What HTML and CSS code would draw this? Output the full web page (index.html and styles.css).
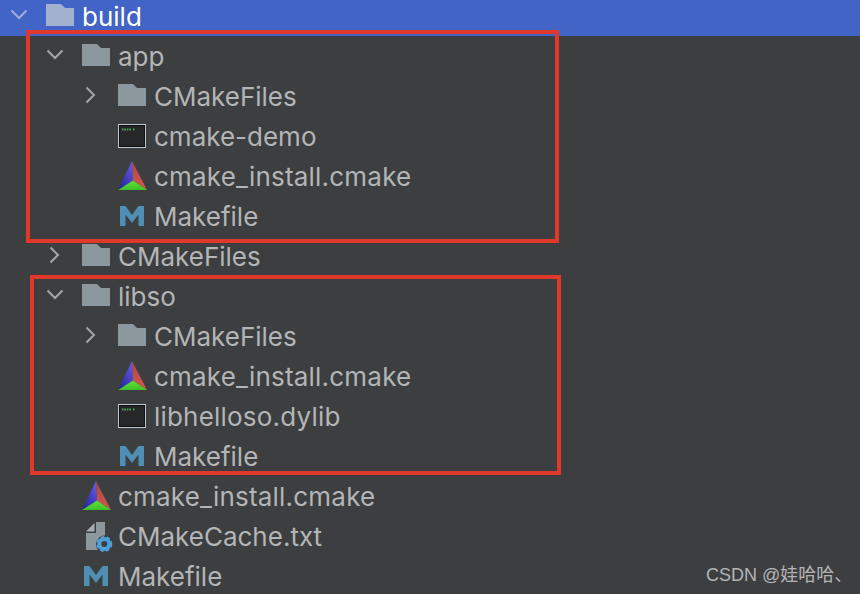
FILE: index.html
```html
<!DOCTYPE html>
<html lang="zh">
<head>
<meta charset="utf-8">
<title>build</title>
<link rel="stylesheet" href="styles.css">
</head>
<body>
<svg class="defs" width="0" height="0" aria-hidden="true">
  <defs>
    <linearGradient id="cm-blue" x1="0" y1="1" x2="0.6" y2="0">
      <stop offset="0" stop-color="#1c1c9c"/>
      <stop offset="1" stop-color="#6058e0"/>
    </linearGradient>
    <linearGradient id="cm-red" x1="0" y1="0" x2="0" y2="1">
      <stop offset="0" stop-color="#a84848"/>
      <stop offset="1" stop-color="#d25850"/>
    </linearGradient>
    <linearGradient id="cm-green" x1="0" y1="0" x2="0" y2="1">
      <stop offset="0" stop-color="#5fe23a"/>
      <stop offset="1" stop-color="#3fc02a"/>
    </linearGradient>
    <symbol id="i-folder" viewBox="0 0 32 32"><path d="M0 4h15l4 4h9v18H0z"/></symbol>
    <symbol id="i-down" viewBox="0 0 18 32"><path d="M1.500 10.500l7.500 7.500 7.500-7.500" fill="none" stroke-width="2"/></symbol>
    <symbol id="i-right" viewBox="0 0 18 32"><path d="M4.500 7.500l7.500 7.500-7.500 7.500" fill="none" stroke-width="2"/></symbol>
    <symbol id="i-term" viewBox="0 0 32 32">
      <rect x="0.500" y="4.500" width="27" height="23" fill="#111" stroke="#b9c9cf"/>
      <rect x="2" y="6" width="24" height="20" fill="#262728"/>
      <path d="M4 9.500h1.500M6.500 9.500h1.500M9 9.500h1.500M11.500 9.500h1.500M15 9.500h1.500" stroke="#4cae4c" stroke-width="2"/>
    </symbol>
    <symbol id="i-cmake" viewBox="0 0 32 32">
      <path d="M14 1L0 30l15-9.500z" fill="url(#cm-blue)"/>
      <path d="M14 1l15 29-14-9.500z" fill="url(#cm-red)"/>
      <path d="M0 30l15-9.500L29 30z" fill="url(#cm-green)"/>
    </symbol>
    <symbol id="i-make" viewBox="0 0 32 32">
      <path fill="#4f8fb4" d="M2 6h5.500l6.500 9 6.500-9H26v20h-5.500V14.500L14 23l-6.500-8.500V26H2z"/>
    </symbol>
    <symbol id="i-cache" viewBox="0 0 32 32">
      <path fill="#8c979e" d="M4 13h10V2h9v13.500a9 9 0 0 0-7 14.500H4z"/>
      <path fill="#a3adb3" d="M4 11.500L12.500 3v8.500z"/>
      <circle cx="22.300" cy="24" r="5" fill="none" stroke="#4f9fd8" stroke-width="4"/>
      <circle cx="22.300" cy="24" r="7" fill="none" stroke="#4f9fd8" stroke-width="2" stroke-dasharray="3.300 2.560"/>
    </symbol>
  </defs>
</svg>

<main class="tree">
  <div class="row selected level-0">
    <svg class="chev"><use href="#i-down"/></svg>
    <svg class="icon folder"><use href="#i-folder"/></svg>
    <span class="name">build</span>
  </div>

  <div class="row level-1">
    <svg class="chev"><use href="#i-down"/></svg>
    <svg class="icon folder"><use href="#i-folder"/></svg>
    <span class="name">app</span>
  </div>
  <div class="row level-2">
    <svg class="chev"><use href="#i-right"/></svg>
    <svg class="icon folder"><use href="#i-folder"/></svg>
    <span class="name">CMakeFiles</span>
  </div>
  <div class="row level-2">
    <span class="chev"></span>
    <svg class="icon"><use href="#i-term"/></svg>
    <span class="name">cmake-demo</span>
  </div>
  <div class="row level-2">
    <span class="chev"></span>
    <svg class="icon"><use href="#i-cmake"/></svg>
    <span class="name wide">cmake_install.cmake</span>
  </div>
  <div class="row level-2">
    <span class="chev"></span>
    <svg class="icon"><use href="#i-make"/></svg>
    <span class="name">Makefile</span>
  </div>

  <div class="row level-1">
    <svg class="chev"><use href="#i-right"/></svg>
    <svg class="icon folder"><use href="#i-folder"/></svg>
    <span class="name">CMakeFiles</span>
  </div>

  <div class="row level-1">
    <svg class="chev"><use href="#i-down"/></svg>
    <svg class="icon folder"><use href="#i-folder"/></svg>
    <span class="name">libso</span>
  </div>
  <div class="row level-2">
    <svg class="chev"><use href="#i-right"/></svg>
    <svg class="icon folder"><use href="#i-folder"/></svg>
    <span class="name">CMakeFiles</span>
  </div>
  <div class="row level-2">
    <span class="chev"></span>
    <svg class="icon"><use href="#i-cmake"/></svg>
    <span class="name wide">cmake_install.cmake</span>
  </div>
  <div class="row level-2">
    <span class="chev"></span>
    <svg class="icon"><use href="#i-term"/></svg>
    <span class="name wide">libhelloso.dylib</span>
  </div>
  <div class="row level-2">
    <span class="chev"></span>
    <svg class="icon"><use href="#i-make"/></svg>
    <span class="name">Makefile</span>
  </div>

  <div class="row level-1">
    <span class="chev"></span>
    <svg class="icon"><use href="#i-cmake"/></svg>
    <span class="name wide">cmake_install.cmake</span>
  </div>
  <div class="row level-1">
    <span class="chev"></span>
    <svg class="icon"><use href="#i-cache"/></svg>
    <span class="name">CMakeCache.txt</span>
  </div>
  <div class="row level-1">
    <span class="chev"></span>
    <svg class="icon"><use href="#i-make"/></svg>
    <span class="name">Makefile</span>
  </div>
</main>

<div class="mark mark-app"></div>
<div class="mark mark-lib"></div>
<div class="watermark">CSDN @娃哈哈、</div>
</body>
</html>
```

FILE: styles.css
```css
html, body {
  margin: 0;
  padding: 0;
  height: 594px;
  overflow: hidden;
  background: #3d3e40;
}

body {
  position: relative;
  font-family: Inter, "Liberation Sans", "Noto Sans CJK SC", sans-serif;
}

.defs {
  position: absolute;
}

.tree {
  display: flex;
  flex-direction: column;
  margin-top: -4px;
}

.row {
  display: flex;
  align-items: center;
  flex: none;
  height: 40px;
  color: #b3b5b6;
  font-size: 26px;
  white-space: nowrap;
}

.level-0 { padding-left: 10px; }
.level-1 { padding-left: 46px; }
.level-2 { padding-left: 82px; }

.selected {
  background: #4164c6;
  color: #fff;
}

.chev {
  flex: none;
  width: 18px;
  height: 32px;
  margin-right: 18px;
  stroke: #a4a7a9;
}

.selected .chev {
  stroke: #9fadd6;
}

.icon {
  flex: none;
  width: 32px;
  height: 32px;
  margin-right: 4px;
}

.folder {
  fill: #8c979e;
}

.selected .folder {
  fill: #a3b1d0;
}

.name {
  display: block;
}

.wide {
  letter-spacing: 0.2px;
}

.mark {
  position: absolute;
  box-sizing: border-box;
  border: 4px solid #e0382b;
}

.mark-app {
  left: 26px;
  top: 30px;
  width: 533px;
  height: 213px;
}

.mark-lib {
  left: 30px;
  top: 275px;
  width: 531px;
  height: 200px;
}

.watermark {
  position: absolute;
  left: 706px;
  top: 564px;
  color: #b4b4b4;
  font-family: "Liberation Sans", "Noto Sans CJK SC", sans-serif;
  font-size: 18px;
  line-height: 22px;
  white-space: nowrap;
}
```
